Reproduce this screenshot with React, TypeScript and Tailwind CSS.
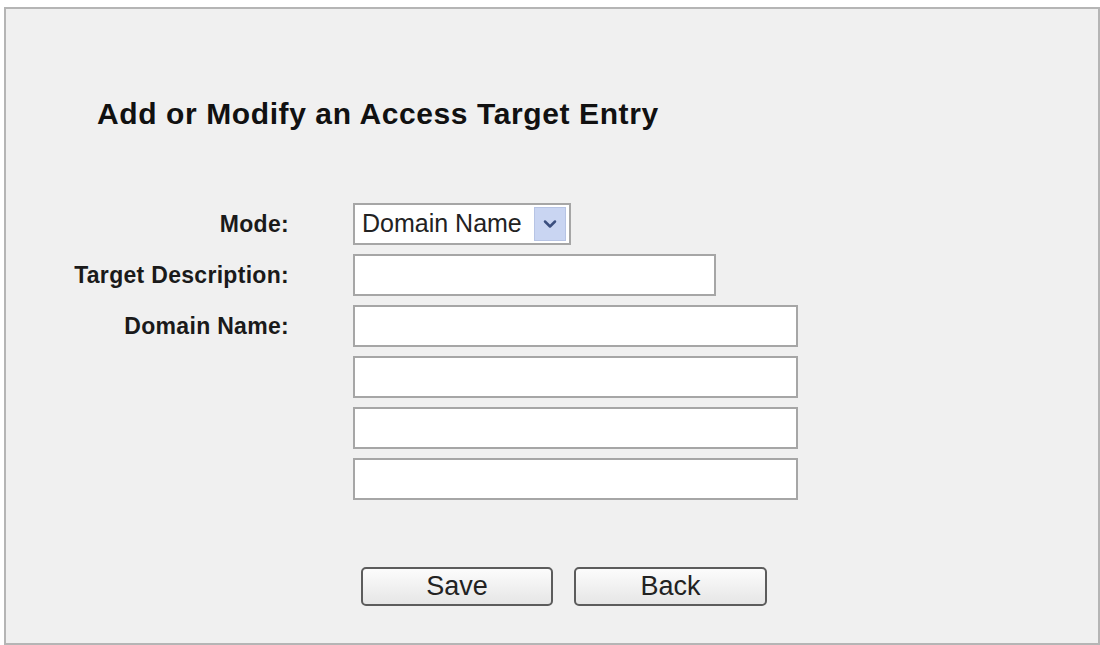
import { ChevronDown } from "lucide-react";

const font = { fontFamily: '"Liberation Sans", Arial, sans-serif' };

// one label + control row of the entry form
function Row({ label, children }: { label?: string; children: React.ReactNode }) {
  return (
    <div className="flex items-center h-[42px]">
      <div className="w-[283px] text-right text-[23px] font-bold text-[#1a1a1a] tracking-[0.3px]">
        {label}
      </div>
      <div className="ml-[64px]">{children}</div>
    </div>
  );
}

function TextBox({ width }: { width: string }) {
  return (
    <input
      type="text"
      className={`${width} h-[42px] bg-white border-2 border-[#a6a6a6] outline-none`}
    />
  );
}

export default function App() {
  return (
    <div className="w-[1100px] h-[645px] bg-white pt-[7px] pl-[4px]" style={font}>
      <div className="w-[1096px] h-[638px] bg-[#f0f0f0] border-2 border-[#b5b5b5] flex flex-col">
        <h1 className="mt-[90px] ml-[91px] text-[30px] leading-[30px] font-bold text-[#111] tracking-[0.6px]">
          Add or Modify an Access Target Entry
        </h1>

        <div className="mt-[74px] flex flex-col gap-[9px]">
          <Row label="Mode:">
            <div className="w-[218px] h-[42px] bg-white border-2 border-[#a6a6a6] flex items-center pl-[7px] pr-[3px]">
              <span className="flex-1 text-[25px] text-[#222]">Domain Name</span>
              <div className="w-[32px] h-[34px] bg-[#c9d5f2] border border-[#b7c4e4] flex items-center justify-center">
                <ChevronDown size={20} strokeWidth={3} className="text-[#3b4f7f]" />
              </div>
            </div>
          </Row>
          <Row label="Target Description:">
            <TextBox width="w-[363px]" />
          </Row>
          <Row label="Domain Name:">
            <TextBox width="w-[445px]" />
          </Row>
          <Row>
            <TextBox width="w-[445px]" />
          </Row>
          <Row>
            <TextBox width="w-[445px]" />
          </Row>
          <Row>
            <TextBox width="w-[445px]" />
          </Row>
        </div>

        <div className="mt-[67px] ml-[355px] flex gap-[21px]">
          <button className="w-[192px] h-[39px] rounded-[5px] border-2 border-[#5c5c5c] bg-gradient-to-b from-[#fcfcfc] to-[#e6e6e6] text-[27px] leading-none text-[#222]">
            Save
          </button>
          <button className="w-[193px] h-[39px] rounded-[5px] border-2 border-[#5c5c5c] bg-gradient-to-b from-[#fcfcfc] to-[#e6e6e6] text-[27px] leading-none text-[#222]">
            Back
          </button>
        </div>
      </div>
    </div>
  );
}
